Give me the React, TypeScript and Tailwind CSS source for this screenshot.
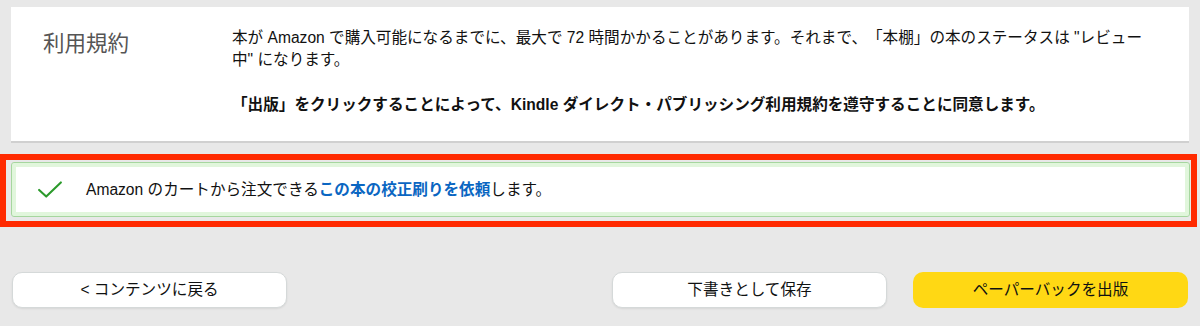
const FONT = "font-['Liberation_Sans','Noto_Sans_CJK_JP',sans-serif] [text-spacing-trim:space-all]";

function Button({ label, primary = false }: { label: string; primary?: boolean }) {
  return (
    <button
      className={
        primary
          ? "h-[36px] w-[275px] rounded-[10px] bg-[#ffd814] text-[15.6px] text-[#0f1111]"
          : "h-[36px] w-[275px] rounded-[10px] border border-[#d5d9d9] bg-white text-[15.6px] text-[#0f1111] shadow-[0_1px_2px_rgba(0,0,0,0.08)]"
      }
    >
      {label}
    </button>
  );
}

export default function App() {
  return (
    <div className={`h-[326px] w-[1200px] bg-[#e8e8e8] pt-[7px] ${FONT}`}>
      {/* terms card */}
      <section className="mx-[11px] flex h-[136px] w-[1178px] border-b-2 border-[#d0d0d0] bg-white">
        <h2 className="w-[221px] shrink-0 pl-[32px] pt-[23px] text-[21.5px] leading-[28px] text-[#555]">
          利用規約
        </h2>
        <div className="pr-[38px] pt-[20px] text-[15.6px] leading-[22px] text-[#111]">
          <p>
            本が Amazon で購入可能になるまでに、最大で 72 時間かかることがあります。それまで、「本棚」の本のステータスは "レビュー中" になります。
          </p>
          <p className="mt-[23px] font-bold">
            「出版」をクリックすることによって、Kindle ダイレクト・パブリッシング利用規約を遵守することに同意します。
          </p>
        </div>
      </section>

      {/* highlighted proof copy notice */}
      <div className="mt-[11px] h-[73px] w-[1197px] border-[6px] border-[#ff2a00] pb-[4px] pl-[5px] pr-[1px] pt-[2px]">
        <div className="flex h-[55px] items-center rounded-[3px] border border-[#a6d69f] bg-white ring-4 ring-inset ring-[#e1f6dc]">
          <svg viewBox="0 0 26 18" className="ml-[25px] mr-[23px] h-[17px] w-[26px]" fill="none">
            <path d="M1.5 9.5 L9 16.5 L24.5 1.5" stroke="#2b9a2b" strokeWidth="2.2" strokeLinecap="round" strokeLinejoin="round" />
          </svg>
          <p className="text-[15.6px] text-[#111]">
            Amazon のカートから注文できる
            <a className="font-bold text-[#0a66c2]">この本の校正刷りを依頼</a>
            します。
          </p>
        </div>
      </div>

      {/* footer actions */}
      <div className="mt-[45px] flex items-center pl-[12px] pr-[12px]">
        <Button label="< コンテンツに戻る" />
        <div className="ml-auto flex gap-[26px]">
          <Button label="下書きとして保存" />
          <Button label="ペーパーバックを出版" primary />
        </div>
      </div>
    </div>
  );
}
